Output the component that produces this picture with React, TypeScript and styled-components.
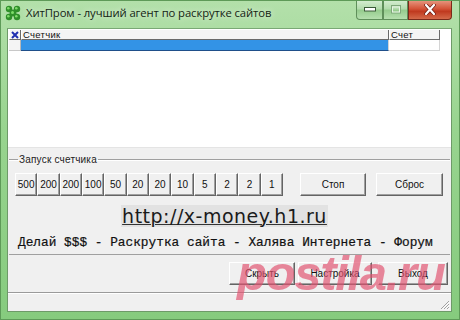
import React from "react";
import styled, { createGlobalStyle } from "styled-components";

const Global = createGlobalStyle`
  html, body { margin: 0; padding: 0; background: #fff; }
  body { width: 460px; height: 320px; overflow: hidden; }
`;

const Window = styled.div`
  position: relative;
  width: 460px;
  height: 320px;
  box-sizing: border-box;
  background: linear-gradient(180deg, #b3e0aa 0%, #98d48f 40%, #86cb7e 100%);
  border: 1px solid #5e9a58;
  display: flex;
  flex-direction: column;
  padding: 0 7px 7px 6px;
  overflow: hidden;
`;

const TitleBar = styled.div`
  height: 27px;
  flex: none;
  display: flex;
  align-items: flex-start;
  position: relative;
`;

const TitleIcon = styled.svg`
  width: 18px;
  height: 18px;
  margin: 3px 4px 0 -3px;
`;

const TitleText = styled.div`
  font-family: "Open Sans", "Noto Sans", sans-serif;
  font-size: 11.3px;
  color: #142414;
  margin-top: 4px;
  letter-spacing: -0.1px;
  text-shadow: 0 0 6px rgba(255, 255, 255, 0.8);
`;

const Controls = styled.div`
  margin-left: auto;
  display: flex;
  margin-top: -1px;
`;

const CtrlBtn = styled.div<{ $w: number; $close?: boolean }>`
  width: ${(p) => p.$w}px;
  height: 20px;
  box-sizing: border-box;
  border: 1px solid ${(p) => (p.$close ? "#7a2a1a" : "#5f8f5a")};
  border-top: none;
  background: ${(p) =>
    p.$close
      ? "linear-gradient(180deg, #e79b84 0%, #d4553a 45%, #c0391f 60%, #d46a4a 100%)"
      : "linear-gradient(180deg, #d7eed3 0%, #b4dcae 45%, #96cc8e 55%, #b5dfae 100%)"};
  display: flex;
  align-items: center;
  justify-content: center;
  border-radius: ${(p) => (p.$close ? "0 0 4px 0" : "0")};
  &:first-child { border-radius: 0 0 0 4px; }
`;

const Client = styled.div`
  flex: 1;
  background: #f0f0f0;
  display: flex;
  flex-direction: column;
  border: 1px solid #6d9a68;
  border-top-color: #7aa875;
`;

const ListView = styled.div`
  height: 119px;
  background: #fff;
  border-bottom: 1px solid #e4e4e4;
  padding: 1px 0 0 1px;
  box-sizing: border-box;
  flex: none;
`;

const Grid = styled.div`
  display: grid;
  grid-template-columns: 12px 368px 51px;
  grid-template-rows: 10px 11px;
`;

const HeadCell = styled.div<{ $corner?: boolean }>`
  box-sizing: border-box;
  background: #f4f4f4;
  border-right: 1px solid #6a6a6a;
  border-bottom: 1px solid #6a6a6a;
  border-left: 1px solid #ffffff;
  font-family: "Liberation Sans", Arial, sans-serif;
  font-size: 9.5px;
  line-height: 9px;
  color: #111;
  padding-left: ${(p) => (p.$corner ? 0 : 1)}px;
  display: flex;
  align-items: center;
  justify-content: ${(p) => (p.$corner ? "center" : "flex-start")};
  letter-spacing: 0.3px;
`;

const RowHead = styled.div`
  box-sizing: border-box;
  background: #f4f4f4;
  border-right: 1px solid #b8b8b8;
  border-bottom: 1px solid #c8c8c8;
`;

const Cell = styled.div<{ $sel?: boolean }>`
  box-sizing: border-box;
  background: ${(p) => (p.$sel ? "#3393e6" : "#fff")};
  border-right: 1px solid #d4d4d4;
  border-bottom: 1px solid ${(p) => (p.$sel ? "#1f4f8a" : "#d4d4d4")};
`;

const Frame = styled.fieldset`
  margin: 6px 1px 0 1px;
  padding: 8px 0 0 6px;
  border: none;
  border-top: 1px solid #a0a0a0;
  box-shadow: 0 1px 0 #fff inset;
  height: 101px;
  box-sizing: border-box;
  flex: none;
  display: flex;
  flex-direction: column;
  min-width: 0;
  border-bottom: 1px solid #a0a0a0;
`;

const Legend = styled.legend`
  font-family: "Liberation Sans", Arial, sans-serif;
  font-size: 10px;
  color: #222;
  padding: 0 1px;
  margin-left: 3px;
  letter-spacing: 0.2px;
`;

const ButtonRow = styled.div`
  display: flex;
  align-items: center;
`;

const Counts = styled.div`
  display: grid;
  grid-template-columns: repeat(12, 22.33px);
  width: 268px;
`;

const Btn = styled.div<{ $w?: number }>`
  box-sizing: border-box;
  ${(p) => (p.$w ? `width: ${p.$w}px;` : "")}
  height: 23px;
  background: #f0f0f0;
  border: 1px solid;
  border-color: #ffffff #646464 #646464 #ffffff;
  box-shadow: inset -1px -1px 0 #a0a0a0;
  font-family: "Liberation Sans", Arial, sans-serif;
  font-size: 10px;
  color: #111;
  display: flex;
  align-items: center;
  justify-content: center;
`;

const Spacer = styled.div<{ $w: number }>`
  width: ${(p) => p.$w}px;
  flex: none;
`;

const Url = styled.a`
  align-self: center;
  margin-top: 9px;
  margin-left: -16px;
  font-family: "DejaVu Sans", Verdana, sans-serif;
  font-size: 19px;
  line-height: 22px;
  letter-spacing: 0.5px;
  color: #1a1a1a;
  background: #e2e2e2;
  text-decoration: underline;
  text-decoration-color: #333;
  text-decoration-thickness: 1px;
  text-underline-offset: 1px;
  padding: 0 1px;
`;

const Slogan = styled.div`
  margin-top: 8px;
  margin-left: 3px;
  font-family: "Liberation Mono", "Courier New", monospace;
  font-size: 12.8px;
  color: #111;
  white-space: pre;
  -webkit-text-stroke: 0.2px #111;
`;

const BottomRow = styled.div`
  display: flex;
  justify-content: flex-end;
  padding: 7px 3px 0 0;
  height: 38px;
  box-sizing: border-box;
  border-bottom: 1px solid #9a9a9a;
  flex: none;
`;

const StatusBar = styled.div`
  flex: 1;
  position: relative;
  border-top: 1px solid #fff;
`;

const Grip = styled.svg`
  position: absolute;
  right: 1px;
  bottom: 1px;
  width: 12px;
  height: 12px;
`;

const Watermark = styled.div`
  position: absolute;
  left: 236px;
  top: 244px;
  font-family: "Liberation Sans", Arial, sans-serif;
  font-weight: bold;
  font-style: italic;
  font-size: 49px;
  letter-spacing: -1.3px;
  color: rgba(226, 82, 112, 0.68);
  pointer-events: none;
`;

const counts = ["500", "200", "200", "100", "50", "20", "20", "10", "5", "2", "2", "1"];

export default function App() {
  return (
    <>
      <Global />
      <Window>
        <TitleBar>
          <TitleIcon viewBox="0 0 18 18">
            <g fill="#2f8f2a">
              <circle cx="5" cy="5" r="3.2" />
              <circle cx="13" cy="5" r="3.2" />
              <circle cx="5" cy="13" r="3.2" />
              <circle cx="13" cy="13" r="3.2" />
              <circle cx="9" cy="9" r="3.5" />
            </g>
            <g fill="#7edc6a">
              <circle cx="4.3" cy="4.3" r="1.3" />
              <circle cx="12.3" cy="4.3" r="1.3" />
              <circle cx="4.3" cy="12.3" r="1.3" />
              <circle cx="12.3" cy="12.3" r="1.3" />
              <circle cx="8.5" cy="8.5" r="1.5" />
            </g>
          </TitleIcon>
          <TitleText>ХитПром - лучший агент по раскрутке сайтов</TitleText>
          <Controls>
            <CtrlBtn $w={27}>
              <svg width="12" height="5"><rect x="0.5" y="0.5" width="11" height="3.5" fill="#fff" stroke="#3a5a38" /></svg>
            </CtrlBtn>
            <CtrlBtn $w={25}>
              <svg width="10" height="9"><rect x="0.5" y="0.5" width="9" height="7.5" fill="none" stroke="#7fa77a" /><rect x="1.5" y="2" width="7" height="5" fill="none" stroke="#e8f4e6" /></svg>
            </CtrlBtn>
            <CtrlBtn $w={44} $close>
              <svg width="12" height="11" viewBox="0 0 12 11">
                <path d="M2 1 L10 10 M10 1 L2 10" stroke="#6a1a10" strokeWidth="3.6" strokeLinecap="round" />
                <path d="M2 1 L10 10 M10 1 L2 10" stroke="#fff" strokeWidth="2.2" strokeLinecap="round" />
              </svg>
            </CtrlBtn>
          </Controls>
        </TitleBar>
        <Client>
          <ListView>
            <Grid>
              <HeadCell $corner>
                <svg width="8" height="8" viewBox="0 0 8 8">
                  <path d="M1 1 L7 7 M7 1 L1 7" stroke="#1f2fb0" strokeWidth="2" />
                </svg>
              </HeadCell>
              <HeadCell>Счетчик</HeadCell>
              <HeadCell>Счет</HeadCell>
              <RowHead />
              <Cell $sel />
              <Cell />
            </Grid>
          </ListView>
          <Frame>
            <Legend>Запуск счетчика</Legend>
            <ButtonRow>
              <Counts>
                {counts.map((c, i) => (
                  <Btn key={i}>{c}</Btn>
                ))}
              </Counts>
              <Spacer $w={17} />
              <Btn $w={66}>Стоп</Btn>
              <Spacer $w={10} />
              <Btn $w={67}>Сброс</Btn>
            </ButtonRow>
            <Url>http://x-money.h1.ru</Url>
            <Slogan>Делай $$$ - Раскрутка сайта - Халява Интернета - Форум</Slogan>
          </Frame>
          <BottomRow>
            <Btn $w={66}>Скрыть</Btn>
            <Spacer $w={3} />
            <Btn $w={74}>Настройка</Btn>
            <Spacer $w={6} />
            <Btn $w={70}>Выход</Btn>
          </BottomRow>
          <StatusBar>
            <Grip viewBox="0 0 12 12">
              <path d="M11 3 L3 11 M11 6 L6 11 M11 9 L9 11" stroke="#a0a0a0" strokeWidth="1" />
              <path d="M11.8 3.8 L3.8 11.8 M11.8 6.8 L6.8 11.8 M11.8 9.8 L9.8 11.8" stroke="#fff" strokeWidth="1" />
            </Grip>
          </StatusBar>
        </Client>
        <Watermark>postila.ru</Watermark>
      </Window>
    </>
  );
}
